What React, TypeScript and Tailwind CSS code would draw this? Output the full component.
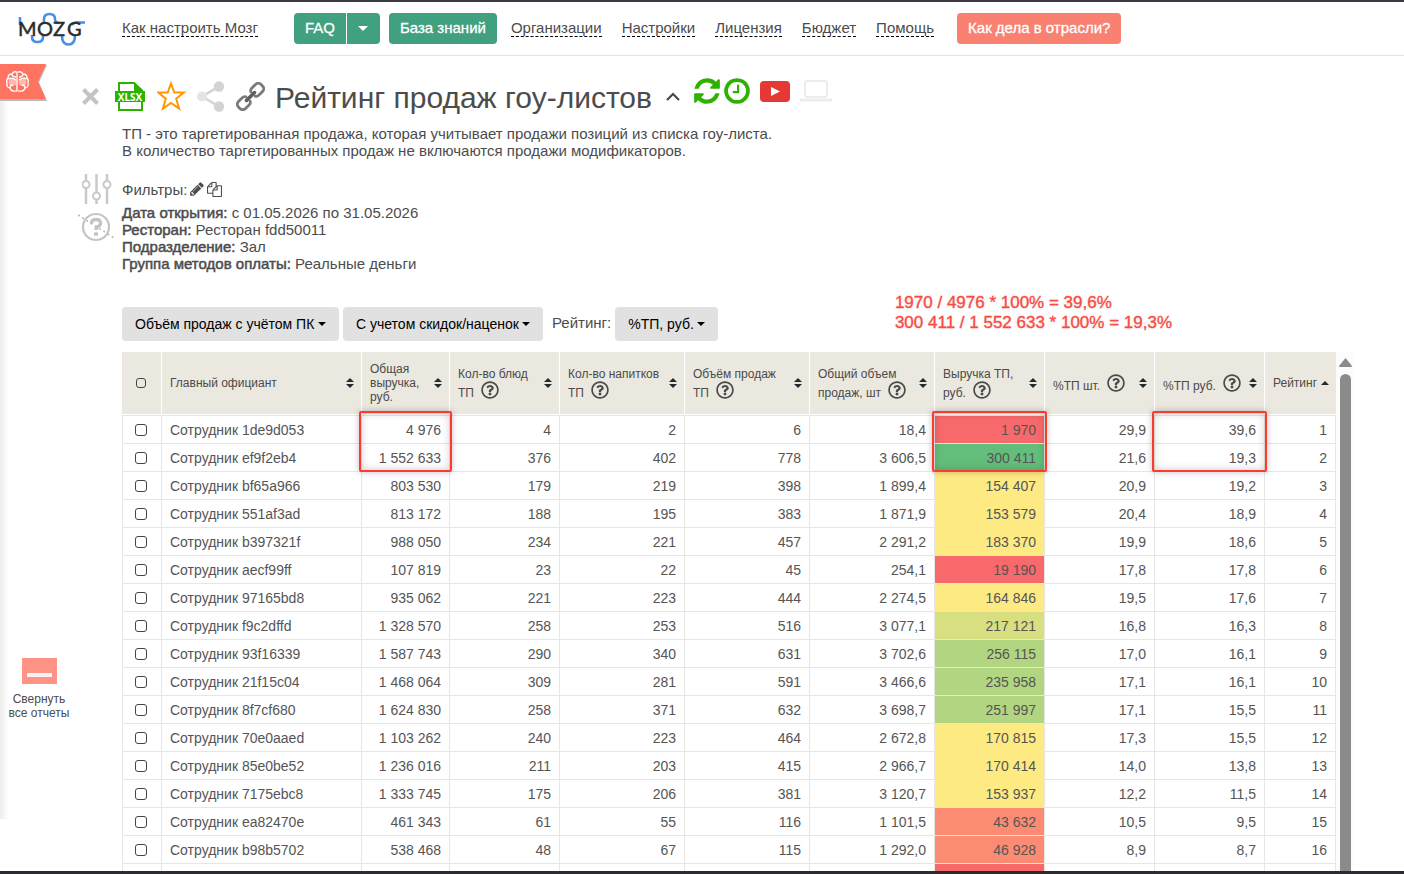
import { useState } from 'react'
import type { ReactNode } from 'react'
import { FaRegQuestionCircle } from 'react-icons/fa'

const NAV_LINKS = ['Организации', 'Настройки', 'Лицензия', 'Бюджет', 'Помощь']

const FILTERS = [
  { label: 'Дата открытия:', value: 'с 01.05.2026 по 31.05.2026' },
  { label: 'Ресторан:', value: 'Ресторан fdd50011' },
  { label: 'Подразделение:', value: 'Зал' },
  { label: 'Группа методов оплаты:', value: 'Реальные деньги' },
]

interface Column {
  lines: string[]
  width: string
  help?: boolean
  sort: 'both' | 'up'
}

const COLUMNS: Column[] = [
  { lines: ['Главный официант'], width: 'w-[200px]', sort: 'both' },
  { lines: ['Общая', 'выручка,', 'руб.'], width: 'w-[88px]', sort: 'both' },
  { lines: ['Кол-во блюд', 'ТП'], width: 'w-[110px]', help: true, sort: 'both' },
  { lines: ['Кол-во напитков', 'ТП'], width: 'w-[125px]', help: true, sort: 'both' },
  { lines: ['Объём продаж', 'ТП'], width: 'w-[125px]', help: true, sort: 'both' },
  { lines: ['Общий объем', 'продаж, шт'], width: 'w-[125px]', help: true, sort: 'both' },
  { lines: ['Выручка ТП,', 'руб.'], width: 'w-[110px]', help: true, sort: 'both' },
  { lines: ['%ТП шт.'], width: 'w-[110px]', help: true, sort: 'both' },
  { lines: ['%ТП руб.'], width: 'w-[110px]', help: true, sort: 'both' },
  { lines: ['Рейтинг'], width: 'w-[72px]', sort: 'up' },
]

const HEAT: Record<string, string> = {
  red: 'bg-[#f8696b]',
  coral: 'bg-[#fb8b73]',
  yellow: 'bg-[#feea83]',
  lime: 'bg-[#d8df81]',
  light: 'bg-[#b1d580]',
  green: 'bg-[#63be7b]',
}

// name, revenue, dishes, drinks, volume, total volume, target revenue, % pcs, % rub, heat
const ROWS = [
  ['Сотрудник 1de9d053', '4 976', '4', '2', '6', '18,4', '1 970', '29,9', '39,6', 'red'],
  ['Сотрудник ef9f2eb4', '1 552 633', '376', '402', '778', '3 606,5', '300 411', '21,6', '19,3', 'green'],
  ['Сотрудник bf65a966', '803 530', '179', '219', '398', '1 899,4', '154 407', '20,9', '19,2', 'yellow'],
  ['Сотрудник 551af3ad', '813 172', '188', '195', '383', '1 871,9', '153 579', '20,4', '18,9', 'yellow'],
  ['Сотрудник b397321f', '988 050', '234', '221', '457', '2 291,2', '183 370', '19,9', '18,6', 'yellow'],
  ['Сотрудник aecf99ff', '107 819', '23', '22', '45', '254,1', '19 190', '17,8', '17,8', 'red'],
  ['Сотрудник 97165bd8', '935 062', '221', '223', '444', '2 274,5', '164 846', '19,5', '17,6', 'yellow'],
  ['Сотрудник f9c2dffd', '1 328 570', '258', '253', '516', '3 077,1', '217 121', '16,8', '16,3', 'lime'],
  ['Сотрудник 93f16339', '1 587 743', '290', '340', '631', '3 702,6', '256 115', '17,0', '16,1', 'light'],
  ['Сотрудник 21f15c04', '1 468 064', '309', '281', '591', '3 466,6', '235 958', '17,1', '16,1', 'light'],
  ['Сотрудник 8f7cf680', '1 624 830', '258', '371', '632', '3 698,7', '251 997', '17,1', '15,5', 'light'],
  ['Сотрудник 70e0aaed', '1 103 262', '240', '223', '464', '2 672,8', '170 815', '17,3', '15,5', 'yellow'],
  ['Сотрудник 85e0be52', '1 236 016', '211', '203', '415', '2 966,7', '170 414', '14,0', '13,8', 'yellow'],
  ['Сотрудник 7175ebc8', '1 333 745', '175', '206', '381', '3 120,7', '153 937', '12,2', '11,5', 'yellow'],
  ['Сотрудник ea82470e', '461 343', '61', '55', '116', '1 101,5', '43 632', '10,5', '9,5', 'coral'],
  ['Сотрудник b98b5702', '538 468', '48', '67', '115', '1 292,0', '46 928', '8,9', '8,7', 'coral'],
  ['', '', '', '', '', '', '', '', '', 'red'],
]

// columns framed in red over the first two rows
const MARKED = [1, 6, 8]

function Logo() {
  return (
    <svg width="68" height="36" viewBox="0 0 68 36" role="img" aria-label="MOZG">
      <g fill="none" stroke="#4a90e2" strokeWidth="2.6">
        <path d="M2 6v8" />
        <path d="M14 24v2q0 5 5.500 5t5.500-5v-3" />
        <path d="M26 13V8q0-5 5.500-5t5.500 5q0 4 4 4" />
        <path d="M45 25h-1q0 8.500 6.500 8.500t6.500-8.500" />
        <path d="M54 14q3-3.500 7-2.500h6" />
      </g>
      <text x="0 19 35 49" y="25" fontFamily="Lato, sans-serif" fontSize="20" fill="#2b2b2b" stroke="#2b2b2b" strokeWidth="0.5">
        MOZG
      </text>
    </svg>
  )
}

function BrainFlag() {
  return (
    <svg width="47" height="37" viewBox="0 0 47 37">
      <path d="M1 1h46l-8 17.500L47 37H0z" fill="#b9b9b9" />
      <path d="M0 0h46l-8 17.500L46 35H0z" fill="#ff7360" />
      <g fill="none" stroke="#fff" strokeWidth="1.300">
        <path d="M17 8v19M17 8q-4-1-5 2-4 0-4 4-2 2-1 5-1 4 3 5 1 4 7 3M18 8q4-1 5 2 4 0 4 4 2 2 1 5 1 4-3 5-1 4-7 3" />
        <path d="M8 15q4-2 8 1M27 15q-4-2-8 1M12 10q0 3 4 3M23 10q0 3-4 3M10 24q0-3 3-3M25 24q0-3-3-3" />
      </g>
      <circle cx="12.500" cy="18" r="4" fill="#fff" opacity=".5" />
      <circle cx="22.500" cy="18" r="4" fill="#fff" opacity=".5" />
    </svg>
  )
}

function Caret({ size = 8 }: { size?: number }) {
  return (
    <svg width={size} height={size / 2} viewBox="0 0 8 4" fill="currentColor">
      <path d="M0 0h8L4 4z" />
    </svg>
  )
}

function XlsxIcon() {
  return (
    <svg width="32" height="31" viewBox="0 0 32 31">
      <path d="M4 10V2h15l8 8M4 21v8h23v-8" fill="none" stroke="#2db200" strokeWidth="2" />
      <path d="M19 1l9 8v2h-9z" fill="#2db200" />
      <path d="M0 10h30v11H0z" fill="#2db200" />
      <text x="15" y="19.500" textAnchor="middle" fontFamily="Open Sans, sans-serif" fontWeight="700" fontSize="10" fill="#fff">
        XLSX
      </text>
    </svg>
  )
}

function StarIcon() {
  return (
    <svg width="30" height="30" viewBox="0 0 30 30" fill="none" stroke="#ff9800" strokeWidth="2">
      <path d="M14 2.500l3.300 9h9.500l-7.600 6.200 2.900 9.800-8.100-5.600-8.100 5.600 2.900-9.800-7.600-6.200h9.500z" />
    </svg>
  )
}

function ShareIcon() {
  return (
    <svg width="29" height="31" viewBox="0 0 29 31">
      <path d="M22 5.500L5 15.500l17 10" fill="none" stroke="#d3d3d3" strokeWidth="2.500" />
      <circle cx="5" cy="15.500" r="5" fill="#e4e4e4" />
      <circle cx="22" cy="5.500" r="5.200" fill="#d3d3d3" />
      <circle cx="22" cy="25.500" r="5.200" fill="#d3d3d3" />
    </svg>
  )
}

function ChainIcon() {
  return (
    <svg width="29" height="29" viewBox="0 0 29 29" fill="none" strokeLinecap="round" strokeWidth="2.800">
      <g stroke="#7a7a7a" transform="rotate(-45 14.500 14.500)">
        <path d="M11 17.500q-1 2-3.500 2H2.500a4 4 0 0 1-4-4v-2a4 4 0 0 1 4-4h5q2.500 0 3.500 2M18 11.500q1-2 3.500-2h5a4 4 0 0 1 4 4v2a4 4 0 0 1-4 4h-5q-2.500 0-3.500-2" />
      </g>
      <path d="M10.500 18.500l8-8" stroke="#5c5c5c" strokeWidth="3.500" />
    </svg>
  )
}

function RefreshIcon() {
  return (
    <svg width="30" height="30" viewBox="0 0 1792 1792" fill="#2db200">
      <path d="M1639 1056q0 5-1 7-64 268-268 434.500t-478 166.500q-146 0-282.500-55t-243.500-157l-129 129q-19 19-45 19t-45-19-19-45v-448q0-26 19-45t45-19h448q26 0 45 19t19 45-19 45l-137 137q71 66 161 102t187 36q134 0 250-65t186-179q11-17 53-117 8-23 30-23h192q13 0 22.500 9.500t9.500 22.500zm25-800v448q0 26-19 45t-45 19h-448q-26 0-45-19t-19-45 19-45l138-138q-148-137-349-137-134 0-250 65t-186 179q-11 17-53 117-8 23-30 23h-199q-13 0-22.500-9.500t-9.500-22.500v-7q65-268 270-434.500t480-166.500q146 0 284 55.500t245 156.500l130-129q19-19 45-19t45 19 19 45z" />
    </svg>
  )
}

function ClockIcon() {
  return (
    <svg width="26" height="30" viewBox="0 0 1536 1792" fill="#2db200">
      <path d="M896 544v448q0 14-9 23t-23 9h-320q-14 0-23-9t-9-23v-64q0-14 9-23t23-9h224v-352q0-14 9-23t23-9h64q14 0 23 9t9 23zm416 352q0-148-73-273t-198-198-273-73-273 73-198 198-73 273 73 273 198 198 273 73 273-73 198-198 73-273zm224 0q0 209-103 385.500t-279.500 279.500-385.500 103-385.500-103-279.500-279.500-103-385.500 103-385.500 279.500-279.500 385.500-103 385.500 103 279.500 279.500 103 385.500z" />
    </svg>
  )
}

function PlayIcon() {
  return (
    <svg width="30" height="21" viewBox="0 0 30 21">
      <rect width="30" height="21" rx="4" fill="#e53935" />
      <path d="M11 6l9 4.500-9 4.500z" fill="#fff" />
    </svg>
  )
}

function LaptopIcon() {
  return (
    <svg width="32" height="22" viewBox="0 0 32 22" fill="none" stroke="#ececec" strokeWidth="2">
      <rect x="5" y="1" width="22" height="16" rx="2" />
      <path d="M0 20h32" strokeWidth="3" />
    </svg>
  )
}

function SlidersIcon() {
  return (
    <svg width="30" height="30" viewBox="0 0 30 30" fill="#fff" stroke="#c9c9c9">
      <path d="M4 0v30M14.500 0v30M25 0v30" strokeWidth="2.500" />
      <circle cx="4" cy="10.500" r="3.500" strokeWidth="2" />
      <circle cx="14.500" cy="22" r="3.500" strokeWidth="2" />
      <circle cx="25" cy="10.500" r="3.500" strokeWidth="2" />
    </svg>
  )
}

function HintOffIcon() {
  return (
    <svg width="36" height="30" viewBox="0 0 36 30" fill="none" stroke="#c4c4c4">
      <circle cx="18" cy="15" r="13" strokeWidth="2.200" />
      <path d="M13.500 11.500q0-4 4.500-4t4.500 3.500q0 2.500-2.500 3.500-2 1-2 3.500" strokeWidth="3.400" />
      <path d="M16 22h4" strokeWidth="3.400" />
      <path d="M0 3l36 23" stroke="#b4b4b4" strokeWidth="1.500" strokeDasharray="2 3" />
    </svg>
  )
}

function PencilIcon() {
  return (
    <svg width="16" height="16" viewBox="0 0 1792 1792" fill="currentColor">
      <path d="M491 1536l91-91-235-235-91 91v107h128v128h107zm523-928q0-22-22-22-10 0-17 7l-542 542q-7 7-7 17 0 22 22 22 10 0 17-7l542-542q7-7 7-17zm-54-192l416 416-832 832h-416v-416zm683 96q0 53-37 90l-166 166-416-416 166-165q36-38 90-38 53 0 91 38l235 234q37 39 37 91z" />
    </svg>
  )
}

function CopyIcon() {
  return (
    <svg width="15" height="15" viewBox="0 0 1792 1792" fill="currentColor">
      <path d="M1696 384q40 0 68 28t28 68v1216q0 40-28 68t-68 28h-960q-40 0-68-28t-28-68v-288h-544q-40 0-68-28t-28-68v-672q0-40 20-88t48-76l408-408q28-28 76-48t88-20h416q40 0 68 28t28 68v328q68-40 128-40h416zm-544 213l-299 299h299v-299zm-640-384l-299 299h299v-299zm196 647l316-316v-416h-384v416q0 40-28 68t-68 28h-416v640h512v-256q0-40 20-88t48-76zm956 804v-1152h-384v416q0 40-28 68t-68 28h-416v640h896z" />
    </svg>
  )
}

function SortIcon({ kind }: { kind: 'both' | 'up' }) {
  return (
    <svg width="8" height="10" viewBox="0 0 8 10" fill="#222c30" className="shrink-0">
      {kind === 'both' ? <path d="M0 4h8L4 0zM0 6h8L4 10z" /> : <path d="M0 7h8L4 3z" />}
    </svg>
  )
}

function IconButton({ label, children }: { label: string; children: ReactNode }) {
  return (
    <button type="button" aria-label={label} className="shrink-0 cursor-pointer">
      {children}
    </button>
  )
}

function Dropdown({ label, value }: { label: string; value: string }) {
  return (
    <span className="relative inline-flex items-center rounded bg-[#e1e1e1] text-black">
      <select aria-label={label} className="h-[34px] appearance-none bg-transparent pr-6 pl-[13px] text-sm">
        <option>{value}</option>
      </select>
      <span className="pointer-events-none absolute right-[13px]">
        <Caret />
      </span>
    </span>
  )
}

function TopBar() {
  return (
    <header className="flex h-[56px] shrink-0 items-center border-t-2 border-b border-t-[#3a3845] border-b-[#e3e3e3] pl-[18px] text-[15px]">
      <a href="#" className="mr-9">
        <Logo />
      </a>
      <a href="#" className="border-b border-dashed border-black leading-4">Как настроить Мозг</a>
      <div className="ml-9 flex gap-px text-white [-webkit-text-stroke:0.3px_white]">
        <button type="button" className="h-[31px] rounded-l bg-[#40a07f] px-[11px]">FAQ</button>
        <button type="button" aria-label="Ещё" className="flex h-[31px] w-[33px] items-center justify-center rounded-r bg-[#40a07f]">
          <Caret size={10} />
        </button>
      </div>
      <button type="button" className="ml-[9px] h-[31px] rounded bg-[#40a07f] px-[11px] text-white [-webkit-text-stroke:0.3px_white]">
        База знаний
      </button>
      <nav className="ml-[14px] flex gap-5">
        {NAV_LINKS.map((l) => (
          <a key={l} href="#" className="border-b border-dashed border-black leading-4">{l}</a>
        ))}
      </nav>
      <button type="button" className="ml-[23px] h-[31px] rounded bg-[#f88172] px-[11px] text-white [-webkit-text-stroke:0.3px_white]">
        Как дела в отрасли?
      </button>
    </header>
  )
}

function Checkbox({ label, small }: { label: string; small?: boolean }) {
  return (
    <input
      type="checkbox"
      aria-label={label}
      className={`mx-auto block appearance-none rounded-[3px] border border-[#444] checked:bg-[#40a07f] ${small ? 'h-[10px] w-[10px]' : 'h-3 w-3 bg-white'}`}
    />
  )
}

function SalesTable() {
  return (
    <table className="w-full table-fixed border-separate border-spacing-0 text-sm text-[#555]">
      <thead className="bg-[#ebe8e0] text-xs leading-[14px] text-[#4a4a4a]">
        <tr>
          <th className="h-[63px] w-[39px] border-b border-white pr-px">
            <Checkbox label="Выбрать все" small />
          </th>
          {COLUMNS.map((c) => (
            <th key={c.lines.join(' ')} className={`${c.width} border-b border-l border-white pr-[7px] pl-2 text-left font-normal`}>
              <div className="flex items-center justify-between">
                <span className="whitespace-nowrap">
                  {c.lines.map((line, i) => (
                    <span key={line} className="block">
                      {line}
                      {c.help && i === c.lines.length - 1 && (
                        <FaRegQuestionCircle className="ml-[7px] inline h-[18px] w-[18px] align-[-2px]" />
                      )}
                    </span>
                  ))}
                </span>
                <SortIcon kind={c.sort} />
              </div>
            </th>
          ))}
        </tr>
      </thead>
      <tbody>
        {ROWS.map((row, r) => (
          <tr key={r} className="h-7">
            <td className="border-t border-l border-[#e8e6e0] pr-[2px]">
              <Checkbox label={row[0] || 'Строка'} />
            </td>
            {row.slice(0, 9).map((cell, c) => (
              <td
                key={c}
                className={`relative border-t border-l border-[#e8e6e0] px-2 whitespace-nowrap ${c === 0 ? 'text-left' : 'text-right'} ${c === 6 ? HEAT[row[9]] : ''}`}
              >
                {cell}
                {r === 0 && MARKED.includes(c) && (
                  <span className="absolute -inset-x-[3px] -top-[5px] z-10 h-[61px] rounded-xs border-2 border-[#fb3b30] shadow-[0_0_6px_rgba(0,0,0,0.25),inset_0_0_8px_rgba(0,0,0,0.2)]" />
                )}
              </td>
            ))}
            <td className="border-x border-t border-[#e8e6e0] px-2 text-right">{row[0] && r + 1}</td>
          </tr>
        ))}
      </tbody>
    </table>
  )
}

export default function App() {
  const [open, setOpen] = useState(true)

  return (
    <div className="flex h-screen flex-col overflow-hidden border-b-[3px] border-[#2d2b30] bg-white font-['Liberation_Sans',Arial,sans-serif] text-[#4c4c4c]">
      <TopBar />
      <div className="flex min-h-0 flex-1">
        <aside className="relative flex w-[78px] shrink-0 flex-col justify-between pt-2 pb-[151px]">
          <div className="absolute top-11 bottom-[52px] left-0 w-2 bg-linear-to-r from-[#ececec] to-white" />
          <a href="#" aria-label="Отчеты" className="relative">
            <BrainFlag />
          </a>
          <button type="button" className="flex flex-col items-center gap-2 text-xs leading-[14px]">
            <span className="flex h-[26px] w-[35px] items-end justify-center bg-[#ff9385] pb-[7px]">
              <span className="h-1 w-[25px] bg-[#f7f3f2]" />
            </span>
            <span>
              Свернуть<br />все отчеты
            </span>
          </button>
        </aside>

        <main className="flex min-w-0 flex-1 flex-col">
          <div className="mt-5 flex h-10 shrink-0 items-center">
            <div className="flex shrink-0 items-center gap-[10px] pl-1">
              <span className="mr-[6px] flex">
                <IconButton label="Закрыть">
                  <svg width="17" height="17" viewBox="0 0 17 17" stroke="#c4c4c4" strokeWidth="4">
                    <path d="M1.500 1.500l14 14M15.500 1.500l-14 14" />
                  </svg>
                </IconButton>
              </span>
              <IconButton label="Выгрузить в XLSX"><XlsxIcon /></IconButton>
              <IconButton label="В избранное"><StarIcon /></IconButton>
              <IconButton label="Поделиться"><ShareIcon /></IconButton>
              <IconButton label="Ссылка"><ChainIcon /></IconButton>
            </div>
            <h1 className="ml-[10px] pt-1 text-[30px] leading-10 whitespace-nowrap">Рейтинг продаж гоу-листов</h1>
            <button type="button" aria-label="Свернуть описание" className="ml-[14px]" onClick={() => setOpen(!open)}>
              <svg width="14" height="9" viewBox="0 0 14 9" fill="none" stroke="#484848" strokeWidth="2.200">
                <path d="M1 8l6-6 6 6" />
              </svg>
            </button>
            <div className="mb-[10px] ml-3 flex items-center gap-[2px]">
              <IconButton label="Обновить"><RefreshIcon /></IconButton>
              <IconButton label="История"><ClockIcon /></IconButton>
            </div>
            <div className="mb-[10px] ml-[10px] flex items-center gap-[10px]">
              <IconButton label="Видео"><PlayIcon /></IconButton>
              <IconButton label="Экран"><LaptopIcon /></IconButton>
            </div>
          </div>

          {open && (
            <p className="mt-[9px] ml-11 shrink-0 text-[15px] leading-[17px]">
              ТП - это таргетированная продажа, которая учитывает продажи позиций из списка гоу-листа.
              <br />
              В количество таргетированных продаж не включаются продажи модификаторов.
            </p>
          )}

          <div className="mt-[15px] flex shrink-0 text-[15px] leading-[17px]">
            <div className="flex w-11 shrink-0 flex-col gap-2 pl-1">
              <IconButton label="Фильтры"><SlidersIcon /></IconButton>
              <div className="-ml-1">
                <IconButton label="Подсказки"><HintOffIcon /></IconButton>
              </div>
            </div>
            <div>
              <div className="flex h-[30px] items-center gap-[2px]">
                Фильтры:
                <IconButton label="Изменить"><PencilIcon /></IconButton>
                <IconButton label="Копировать"><CopyIcon /></IconButton>
              </div>
              {FILTERS.map((f) => (
                <p key={f.label}>
                  <span className="[-webkit-text-stroke:0.5px_#4c4c4c]">{f.label}</span> {f.value}
                </p>
              ))}
            </div>
          </div>

          <div className="mt-[21px] ml-11 flex shrink-0 items-end">
            <Dropdown label="Объём продаж" value="Объём продаж с учётом ПК" />
            <span className="ml-1">
              <Dropdown label="Скидки и наценки" value="С учетом скидок/наценок" />
            </span>
            <span className="mr-1 mb-[7px] ml-[9px] text-[15px]">Рейтинг:</span>
            <Dropdown label="Рейтинг" value="%ТП, руб." />
            <p className="mr-[232px] mb-2 ml-auto text-[17px] leading-5 text-[#fb4a40] [-webkit-text-stroke:0.3px_#fb4a40] [text-shadow:0_0_3px_rgba(0,0,0,0.15)]">
              1970 / 4976 * 100% = 39,6%
              <br />
              300 411 / 1 552 633 * 100% = 19,3%
            </p>
          </div>

          <div className="mt-[11px] mr-[50px] ml-11 flex min-h-0 flex-1 overflow-hidden">
            <div className="min-w-0 flex-1">
              <SalesTable />
            </div>
            <div className="flex w-[18px] shrink-0 flex-col items-center gap-[7px] bg-[#fcfcfc] pt-[6px] pl-px">
              <svg width="13" height="9" viewBox="0 0 13 9" fill="#8b8b8b">
                <path d="M6.500 0L13 8q0 1-1 1H1q-1 0-1-1z" />
              </svg>
              <div className="w-[11px] flex-1 rounded-t-md bg-[#8b8b8b]" />
            </div>
          </div>
        </main>
      </div>
    </div>
  )
}
